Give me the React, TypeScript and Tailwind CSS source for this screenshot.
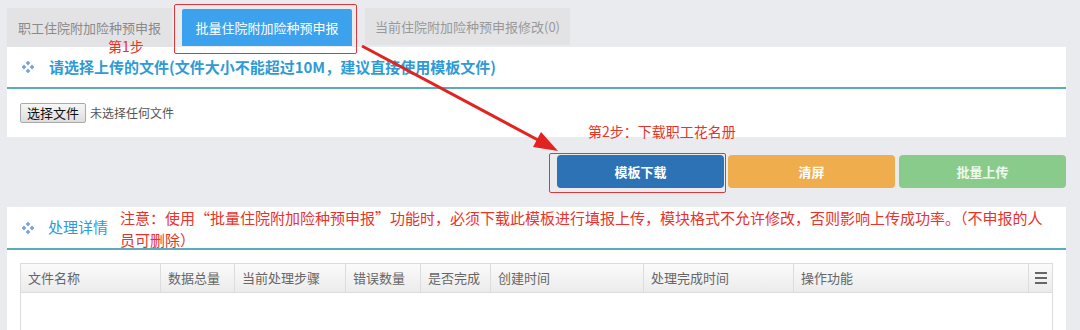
import React from "react";

const FONT = { fontFamily: '"Noto Sans CJK SC", "Noto Sans", "Liberation Sans", sans-serif' };

function Diamond() {
  return (
    <svg width="12" height="12" viewBox="0 0 12 12" className="shrink-0">
      <rect x="4.3" y="0.3" width="3.4" height="3.4" transform="rotate(45 6 2)" fill="#7aa3d6" />
      <rect x="8.3" y="4.3" width="3.4" height="3.4" transform="rotate(45 10 6)" fill="#7aa3d6" />
      <rect x="4.3" y="8.3" width="3.4" height="3.4" transform="rotate(45 6 10)" fill="#7aa3d6" />
      <rect x="0.3" y="4.3" width="3.4" height="3.4" transform="rotate(45 2 6)" fill="#7aa3d6" />
    </svg>
  );
}

const cols: { label: string; w: number }[] = [
  { label: "文件名称", w: 141 },
  { label: "数据总量", w: 74 },
  { label: "当前处理步骤", w: 111 },
  { label: "错误数量", w: 75 },
  { label: "是否完成", w: 70 },
  { label: "创建时间", w: 153 },
  { label: "处理完成时间", w: 150 },
  { label: "操作功能", w: 235 },
];

export default function App() {
  return (
    <div
      className="relative w-[1080px] h-[330px] overflow-hidden bg-[#eaebef] pl-[7px]"
      style={FONT}
    >
      {/* Tabs */}
      <div className="flex items-start h-[47px] pt-[8px]">
        <div className="w-[165px] h-[39px] bg-[#e3e3e5] flex items-center justify-center text-[13px] text-[#8a8a8a]">
          职工住院附加险种预申报
        </div>
        <div className="ml-[10px] mt-[1px] w-[170px] h-[37px] bg-[#3da2ee] rounded-t-[2px] flex items-center justify-center text-[13px] text-white">
          批量住院附加险种预申报
        </div>
        <div className="ml-[13px] w-[205px] h-[37px] bg-[#e3e3e5] flex items-center justify-center text-[13px] text-[#999]">
          当前住院附加险种预申报修改(0)
        </div>
      </div>

      {/* Panel 1 */}
      <div className="w-[1059px] h-[90px] bg-white flex flex-col">
        <div className="h-[40px] flex items-center pl-[15px] gap-[15px]">
          <Diamond />
          <span className="text-[15px] font-bold text-[#2e9bd6]">
            请选择上传的文件(文件大小不能超过10M，建议直接使用模板文件)
          </span>
        </div>
        <div className="h-[2px] bg-[#5aabbb]" />
        <div className="flex-1 flex items-center pl-[13px] gap-[4px]">
          <div className="h-[20px] px-[6px] flex items-center border border-[#a9a9a9] rounded-[2px] bg-gradient-to-b from-[#f6f6f6] to-[#dedede] text-[13px] text-[#111]">
            选择文件
          </div>
          <span className="text-[12px] text-[#555]">未选择任何文件</span>
        </div>
      </div>

      {/* Buttons */}
      <div className="w-[1059px] flex justify-end gap-[4px] mt-[18px]">
        <div className="w-[167px] h-[33px] rounded-[4px] bg-[#2e72b6] flex items-center justify-center text-[13px] font-bold text-white">
          模板下载
        </div>
        <div className="w-[167px] h-[33px] rounded-[4px] bg-[#f0ad4e] flex items-center justify-center text-[13px] font-bold text-white">
          清屏
        </div>
        <div className="w-[167px] h-[33px] rounded-[4px] bg-[#89cb8b] flex items-center justify-center text-[13px] font-bold text-[#eef8ee]">
          批量上传
        </div>
      </div>

      {/* Panel 2 */}
      <div className="w-[1059px] h-[200px] bg-white mt-[19px] flex flex-col">
        <div className="h-[41px] flex items-start pl-[15px]">
          <div className="h-[41px] flex items-center gap-[14px]">
            <Diamond />
            <span className="text-[15px] text-[#2e9bd6]">处理详情</span>
          </div>
          <div className="ml-[12px] text-[15px] leading-[22px] text-[#e8332c]">
            <div>注意：使用“批量住院附加险种预申报”功能时，必须下载此模板进行填报上传，模块格式不允许修改，否则影响上传成功率。（不申报的人</div>
            <div>员可删除）</div>
          </div>
        </div>
        <div className="h-[2px] bg-[#5aabbb]" />
        <div className="px-[13px] pt-[13px] flex-1">
          <div className="w-[1033px] h-full border-l border-r border-[#dcdcdc] flex flex-col">
            <div className="h-[30px] flex border-t border-b border-[#dcdcdc] bg-gradient-to-b from-[#fbfbfb] to-[#ebebeb]">
              {cols.map((c, i) => (
                <div
                  key={c.label}
                  style={{ width: c.w - (i === 0 ? 1 : 0) }}
                  className={
                    "h-full flex items-center pl-[7px] text-[13px] text-[#666] border-r border-[#dcdcdc] shrink-0"
                  }
                >
                  {c.label}
                </div>
              ))}
              <div className="flex-1 h-full flex items-center justify-center">
                <div className="flex flex-col gap-[3px]">
                  <div className="w-[12px] h-[2px] bg-[#666]" />
                  <div className="w-[12px] h-[2px] bg-[#666]" />
                  <div className="w-[12px] h-[2px] bg-[#666]" />
                </div>
              </div>
            </div>
            <div className="flex-1 bg-white" />
          </div>
        </div>
      </div>

      {/* Annotations */}
      <div className="absolute left-[174px] top-[4px] w-[183px] h-[50px] border border-[#e0383a] rounded-[2px] pointer-events-none" />
      <div className="absolute left-[108px] top-[36px] text-[14px] leading-[20px] text-[#e8332c]">第1步</div>
      <div className="absolute left-[549px] top-[153px] w-[177px] h-[40px] border border-[#e0383a] rounded-[2px] pointer-events-none" />
      <div className="absolute left-[588px] top-[121px] text-[14px] leading-[20px] text-[#e8332c]">第2步：下载职工花名册</div>
      <svg className="absolute left-0 top-0 pointer-events-none" width="1080" height="330">
        <line x1="362" y1="46" x2="538" y2="140" stroke="#e2231f" strokeWidth="3" />
        <polygon points="558,151 533,147 541,132" fill="#e2231f" />
      </svg>
    </div>
  );
}
